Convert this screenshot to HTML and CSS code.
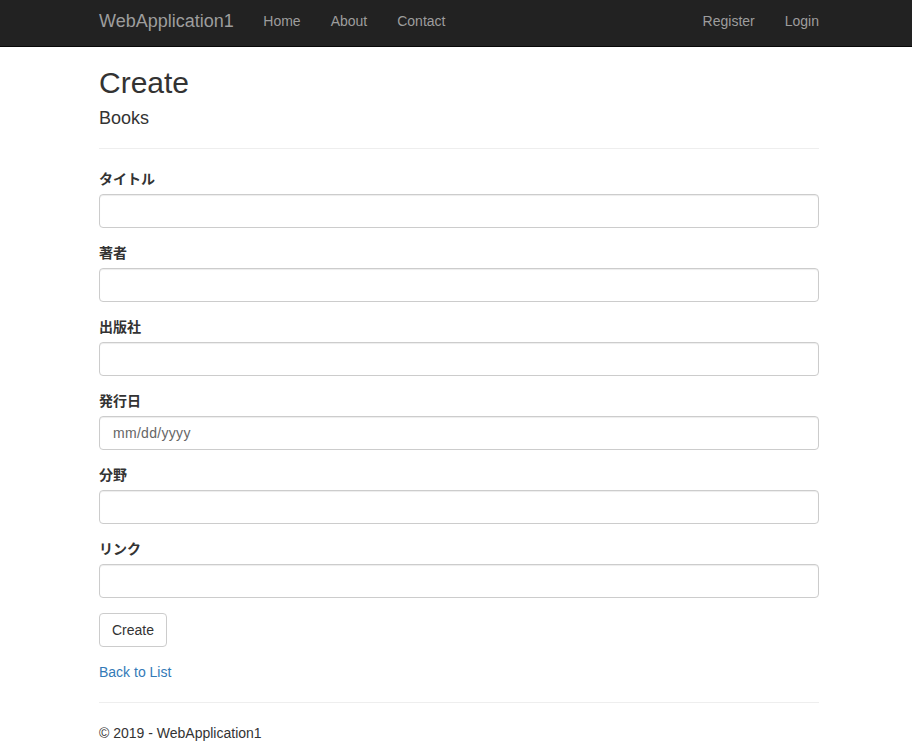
FILE: index.html
```html
<!DOCTYPE html>
<html lang="ja">
<head>
    <meta charset="UTF-8">
    <title>Create - WebApplication1</title>
    <link rel="stylesheet" href="styles.css">
</head>
<body>

    <nav class="navbar">
        <div class="container navbar-inner">
            <a class="navbar-brand" href="#">WebApplication1</a>
            <ul class="nav">
                <li><a href="#">Home</a></li>
                <li><a href="#">About</a></li>
                <li><a href="#">Contact</a></li>
            </ul>
            <ul class="nav nav-right">
                <li><a href="#">Register</a></li>
                <li><a href="#">Login</a></li>
            </ul>
        </div>
    </nav>

    <div class="container">
        <h2>Create</h2>
        <form>
            <h4>Books</h4>
            <hr>
            <div class="form-group">
                <label for="title">タイトル</label>
                <input class="form-control" type="text" id="title">
            </div>
            <div class="form-group">
                <label for="author">著者</label>
                <input class="form-control" type="text" id="author">
            </div>
            <div class="form-group">
                <label for="publisher">出版社</label>
                <input class="form-control" type="text" id="publisher">
            </div>
            <div class="form-group">
                <label for="date">発行日</label>
                <input class="form-control date-fake" type="text" id="date" placeholder="mm/dd/yyyy">
            </div>
            <div class="form-group">
                <label for="genre">分野</label>
                <input class="form-control" type="text" id="genre">
            </div>
            <div class="form-group">
                <label for="link">リンク</label>
                <input class="form-control" type="text" id="link">
            </div>
            <div class="form-group">
                <button class="btn" type="button">Create</button>
            </div>
        </form>
        <div class="back-link"><a href="#">Back to List</a></div>
        <hr class="footer-rule">
        <footer>© 2019 - WebApplication1</footer>
    </div>

</body>
</html>
```

FILE: styles.css
```css
/* Bootstrap 3 style page */
* {
    box-sizing: border-box;
}

body {
    font-family: "Liberation Sans", "Noto Sans CJK JP", Arial, sans-serif;
    font-size: 14px;
    line-height: 20px;
    color: #333;
    background-color: #fff;
    margin: 0;
}

a {
    text-decoration: none;
    color: #337ab7;
}

.container {
    width: 750px;
    margin-left: 84px;
    padding: 0 15px;
}

/* Top bar */
.navbar {
    height: 47px;
    background-color: #222;
    border-bottom: 1px solid #080808;
}

.navbar-inner {
    display: flex;
    height: 46px;
}

.navbar-brand {
    font-size: 18px;
    line-height: 20px;
    padding: 11px 0;
    margin-right: 14.5px;
    color: #9d9d9d;
}

.nav {
    display: flex;
    list-style: none;
    margin: 0;
    padding: 0;
}

.nav a {
    display: block;
    padding: 11px 15px;
    color: #9d9d9d;
}

.nav-right {
    margin-left: auto;
}

.nav-right li:last-child a {
    padding-right: 0;
}

/* Headings */
h2 {
    font-size: 30px;
    font-weight: 500;
    line-height: 33px;
    margin: 19px 0 9px;
}

h4 {
    font-size: 18px;
    font-weight: 500;
    line-height: 20px;
    margin: 9px 0 10px;
}

hr {
    border: 0;
    border-top: 1px solid #eee;
    margin: 20px 0;
}

/* Form */
.form-group {
    margin-bottom: 15px;
}

.form-group label {
    display: block;
    font-weight: bold;
    margin-bottom: 5px;
}

.form-control {
    display: block;
    width: 100%;
    height: 34px;
    padding: 6px 12px;
    font-family: inherit;
    font-size: 14px;
    color: #555;
    background-color: #fff;
    border: 1px solid #ccc;
    border-radius: 4px;
    box-shadow: inset 0 1px 1px rgba(0, 0, 0, 0.075);
}

.date-fake {
    padding-left: 13px;
    letter-spacing: 0.3px;
}

.date-fake::placeholder {
    color: #666;
    opacity: 1;
}

.btn {
    height: 34px;
    padding: 6px 12px;
    font-family: inherit;
    font-size: 14px;
    color: #333;
    background-color: #fff;
    border: 1px solid #ccc;
    border-radius: 4px;
}

.footer-rule {
    margin: 20px 0;
}

footer {
    margin-bottom: 20px;
}
```
